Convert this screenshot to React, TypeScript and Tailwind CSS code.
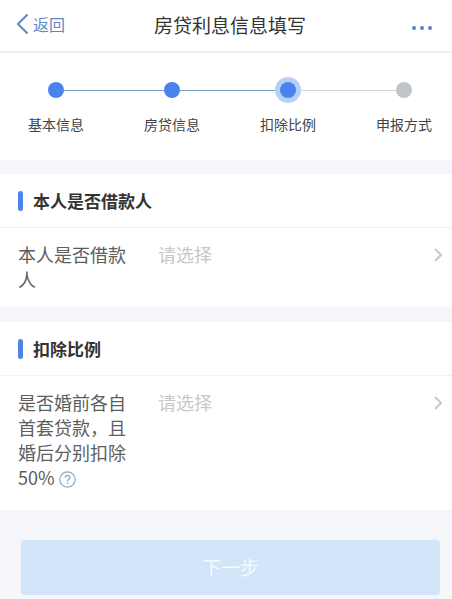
import type { ReactNode } from 'react';

type StepState = 'done' | 'current' | 'todo';

const steps: { label: string; state: StepState }[] = [
  { label: '基本信息', state: 'done' },
  { label: '房贷信息', state: 'done' },
  { label: '扣除比例', state: 'current' },
  { label: '申报方式', state: 'todo' },
];

const dotStyles: Record<StepState, string> = {
  done: 'bg-[#4a82ee]',
  current: 'bg-[#4a82ee] ring-5 ring-[#b5d2f6]',
  todo: 'bg-[#c1c5cb]',
};

function Header() {
  return (
    <header className="grid h-[53px] grid-cols-[1fr_auto_1fr] items-center border-b-2 border-[#f0f0f2] pl-4 pr-2">
      <button type="button" className="flex items-center gap-1 justify-self-start pb-1 text-base leading-[22px] text-[#5f88c8]">
        <svg viewBox="0 0 13 22" className="h-[22px] w-[13px]" fill="none" stroke="#5b86cc" strokeWidth="2">
          <path d="M11.5 1.5 2 11l9.500 9.500" />
        </svg>
        返回
      </button>
      <h1 className="text-[19px] text-[#333]">房贷利息信息填写</h1>
      <button type="button" aria-label="更多" className="flex gap-1 justify-self-end px-3 pt-1">
        <span className="size-1 rounded-full bg-[#5480cc]" />
        <span className="size-1 rounded-full bg-[#5480cc]" />
        <span className="size-1 rounded-full bg-[#5480cc]" />
      </button>
    </header>
  );
}

function Steps() {
  return (
    <nav aria-label="填写进度" className="bg-white pb-[25px] pl-7 pr-5 pt-[29px]">
      <div className="flex items-center px-5">
        {steps.map((step, i) => (
          <div key={step.label} className={i > 0 ? 'flex flex-1 items-center' : 'flex items-center'}>
            {i > 0 && (
              <span className={step.state === 'todo' ? 'h-px flex-1 bg-[#d3d5d8]' : 'h-px flex-1 bg-[#7ba3bd]'} />
            )}
            <span className={`relative size-4 rounded-full ${dotStyles[step.state]}`} />
          </div>
        ))}
      </div>
      <ol className="mt-[15px] flex justify-between text-sm leading-[22px] text-[#444]">
        {steps.map((step) => (
          <li key={step.label}>{step.label}</li>
        ))}
      </ol>
    </nav>
  );
}

function Section({ title, children }: { title: string; children: ReactNode }) {
  return (
    <section className="bg-white">
      <div className="flex h-[54px] items-center gap-[10px] border-b border-[#f1f1f3] px-[18px]">
        <span className="h-5 w-[5px] rounded-sm bg-[#4f83e6]" />
        <h2 className="text-[17px] font-bold text-[#333]">{title}</h2>
      </div>
      {children}
    </section>
  );
}

function SelectRow({ id, label, help, className }: { id: string; label: string; help?: ReactNode; className: string }) {
  return (
    <div className={`flex items-start gap-8 pl-[18px] pr-[10px] pt-[14px] text-lg leading-[25px] ${className}`}>
      <div className="w-[108px] shrink-0 text-[#5c5e60]">
        <label htmlFor={id}>{label}</label>
        {help}
      </div>
      <div className="flex min-w-0 flex-1 items-center">
        <select id={id} defaultValue="" className="h-[25px] min-w-0 flex-1 appearance-none bg-transparent text-[#c8c8ca]">
          <option value="">请选择</option>
          <option value="yes">是</option>
          <option value="no">否</option>
        </select>
        <svg viewBox="0 0 8 14" className="h-[14px] w-2" fill="none" stroke="#c9c9cb" strokeWidth="2">
          <path d="m1 1 6 6-6 6" />
        </svg>
      </div>
    </div>
  );
}

function HelpButton() {
  return (
    <button type="button" aria-label="说明" className="ml-1 pb-px align-middle">
      <svg viewBox="0 0 17 17" className="size-[17px]" fill="none" stroke="#86a9c4">
        <circle cx="8.500" cy="8.500" r="7.700" strokeWidth="1.200" />
        <path d="M6.200 6.700c0-3.200 4.700-3 4.700-.2 0 1.700-2.300 1.800-2.300 3.700" strokeWidth="1.300" />
        <path d="M8.600 11.500v1.500" strokeWidth="1.400" />
      </svg>
    </button>
  );
}

export default function App() {
  return (
    <div className="min-h-screen bg-[#f4f6fa] font-['Noto_Sans_CJK_SC',sans-serif]">
      <div className="bg-white">
        <Header />
        <Steps />
      </div>
      <main className="mt-[14px] flex flex-col gap-[15px]">
        <Section title="本人是否借款人">
          <SelectRow id="borrower" label="本人是否借款人" className="pb-[15px]" />
        </Section>
        <Section title="扣除比例">
          <SelectRow
            id="ratio"
            label="是否婚前各自首套贷款，且婚后分别扣除50%"
            help={<HelpButton />}
            className="pb-5"
          />
        </Section>
      </main>
      <footer className="pb-1 pl-[21px] pr-3 pt-[30px]">
        <button type="button" className="h-[55px] w-full rounded bg-[#d2e5f9] text-[19px] text-[#f6fbfd]">
          下一步
        </button>
      </footer>
    </div>
  );
}
